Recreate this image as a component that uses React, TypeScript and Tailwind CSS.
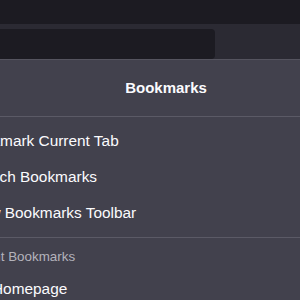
export default function App() {
  return (
    <div
      className="w-[300px] h-[300px] overflow-hidden bg-[#1c1b22] flex flex-col"
      style={{ fontFamily: '"Liberation Sans", Arial, sans-serif' }}
    >
      {/* tab strip */}
      <div className="h-[24px] shrink-0 bg-[#1c1b22]" />

      {/* nav toolbar with url field */}
      <div className="h-[35px] shrink-0 bg-[#2b2a33] pt-[5px] flex">
        <div className="w-[240px] ml-[-25px] h-[30px] rounded-[4px] bg-[#1c1b22]" />
      </div>

      {/* bookmarks panel, its left side runs off screen */}
      <div className="ml-[-68px] w-[468px] flex-1 bg-[#42414d] border-t border-[#55545f] text-[#fbfbfe]">
        <div className="h-[56px] flex items-center justify-center text-[15px] font-bold">
          Bookmarks
        </div>
        <div className="h-px bg-[#5b5a66]" />

        <div className="py-[6px]">
          <div className="h-[36px] flex items-center pl-[33px] text-[15.4px]">Bookmark Current Tab</div>
          <div className="h-[36px] flex items-center pl-[35px] text-[15.4px]">Search Bookmarks</div>
          <div className="h-[36px] flex items-center pl-[30px] text-[15.4px]">Show Bookmarks Toolbar</div>
        </div>
        <div className="h-px bg-[#5b5a66]" />

        <div className="pt-[6px]">
          <div className="h-[26px] flex items-center pl-[30px] text-[13.4px] text-[#b4b3bc]">
            Recent Bookmarks
          </div>
          <div className="h-[38px] flex items-center gap-[10px] pl-[34px] text-[15.4px]">
            <div className="w-[16px] h-[16px] rounded-full bg-[#8f8f9d]" />
            <span>Homepage</span>
          </div>
        </div>
      </div>
    </div>
  );
}
